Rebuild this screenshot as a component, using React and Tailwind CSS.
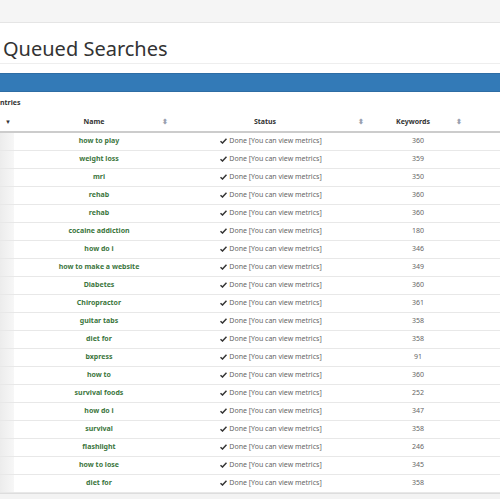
const rows = [
  ['how to play', 360], ['weight loss', 359], ['mri', 350], ['rehab', 360], ['rehab', 360],
  ['cocaine addiction', 180], ['how do i', 346], ['how to make a website', 349], ['Diabetes', 360],
  ['Chiropractor', 361], ['guitar tabs', 358], ['diet for', 358], ['bxpress', 91], ['how to', 360],
  ['survival foods', 252], ['how do i', 347], ['survival', 358], ['flashlight', 246], ['how to lose', 345],
  ['diet for', 358],
]

const Sort = () => <span className="text-[7px] text-gray-400 leading-none">⬍</span>

const Check = () => (
  <svg width="7" height="6" viewBox="0 0 7 6" className="inline-block mr-[2px] -mt-[1px]">
    <path d="M0.5 3.2 L2.5 5 L6.5 0.8" fill="none" stroke="#333" strokeWidth="1.5" />
  </svg>
)

export default function App() {
  return (
    <div className="w-[500px] h-[500px] overflow-hidden bg-white font-['Liberation_Sans'] text-[#333]">
      <div className="h-[23px] bg-[#f5f5f5] border-b border-[#e5e5e5]" />
      <div className="h-[41px] pl-[3px] flex items-end pb-[4px] border-b border-[#eee]">
        <h1 className="text-[20px] leading-none text-[#333]">Queued Searches</h1>
      </div>
      <div className="mt-[9px] h-[19px] bg-[#337ab7] border-y border-[#2e6da4]" />
      <div className="h-[22px] flex items-center text-[7px] font-bold text-[#333]">ntries</div>
      <div className="flex h-[19px] items-center text-[7px] font-bold border-b-2 border-[#ccc]">
        <div className="w-[14px] flex justify-end pr-[3px] text-[6px]">▼</div>
        <div className="w-[158px] flex items-center"><span className="flex-1 text-center pl-[12px]">Name</span><span className="pr-[4px]"><Sort /></span></div>
        <div className="w-[198px] flex items-center"><span className="flex-1 text-center">Status</span><span className="pr-[6px]"><Sort /></span></div>
        <div className="w-[96px] flex items-center"><span className="flex-1 text-center">Keywords</span><span className="pr-[4px]"><Sort /></span></div>
        <div className="flex-1" />
      </div>
      {rows.map(([n, k], i) => (
        <div key={i} className="flex h-[18px] items-center border-b border-[#e8e8e8] text-[7px]">
          <div className="w-[14px] self-stretch bg-gradient-to-r from-[#ececec] to-[#f7f7f7]" />
          <div className="w-[158px] text-center pl-[12px] font-bold text-[#3c763d]">{n}</div>
          <div className="w-[198px] text-center text-[#666]"><Check />Done [You can view metrics]</div>
          <div className="w-[96px] text-center text-[#666]">{k}</div>
          <div className="flex-1" />
        </div>
      ))}
      <div className="h-[6px] bg-[#f3f3f3] border-t border-[#ddd]" />
    </div>
  )
}
